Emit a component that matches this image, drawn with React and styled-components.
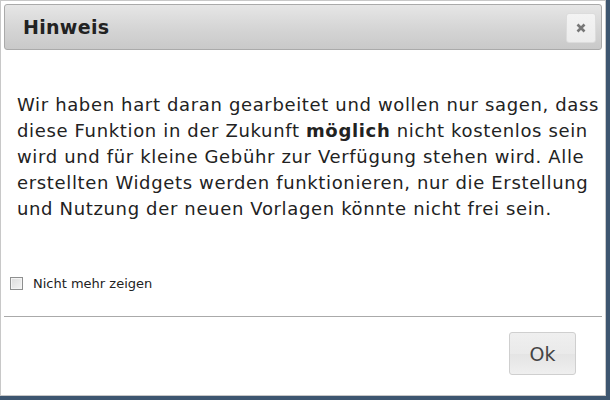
import React from "react";
import styled, { createGlobalStyle } from "styled-components";

const Global = createGlobalStyle`
  html, body { margin: 0; padding: 0; background: #3d5670; }
  body { width: 610px; height: 400px; overflow: hidden; font-family: "DejaVu Sans", Verdana, sans-serif; }
`;

const Dialog = styled.div`
  box-sizing: border-box;
  width: 606px;
  height: 396px;
  background: #fff;
  border: 1px solid #c8c8c8;
  padding: 3px;
  display: flex;
  flex-direction: column;
`;

const TitleBar = styled.div`
  box-sizing: border-box;
  height: 46px;
  flex-shrink: 0;
  border: 1px solid #aaa;
  border-radius: 3px;
  background: linear-gradient(to bottom, #e6e6e6 0%, #d6d6d6 50%, #c9c9c9 100%);
  display: flex;
  align-items: center;
  justify-content: space-between;
  padding: 0 5px 0 18px;
`;

const Title = styled.span`
  font-family: "DejaVu Sans", Verdana, sans-serif;
  font-weight: bold;
  font-size: 19px;
  letter-spacing: 0.3px;
  color: #222;
`;

const CloseButton = styled.button`
  box-sizing: border-box;
  width: 30px;
  height: 30px;
  margin-top: 1px;
  border: 1px solid #dcdcdc;
  border-radius: 3px;
  background: linear-gradient(to bottom, #f3f3f3 0%, #ececec 100%);
  display: flex;
  align-items: center;
  justify-content: center;
  padding: 0;
`;

const Body = styled.div`
  padding: 42px 0 0 13px;
  font-size: 18px;
  line-height: 26px;
  letter-spacing: 0.65px;
  color: #222;
  white-space: nowrap;
`;

const CheckRow = styled.label`
  display: flex;
  align-items: center;
  gap: 10px;
  margin: 54px 0 0 6px;
  font-size: 13px;
  color: #222;
`;

const Box = styled.span`
  box-sizing: border-box;
  width: 13px;
  height: 13px;
  border: 1px solid #8e8f8f;
  background: linear-gradient(135deg, #dcdcdc 0%, #f4f4f4 100%);
  box-shadow: inset 0 0 0 1px #f4f4f4;
`;

const Separator = styled.hr`
  border: none;
  border-top: 1px solid #aaa;
  margin: 25px 0 0 0;
`;

const Footer = styled.div`
  display: flex;
  justify-content: flex-end;
  padding: 15px 26px 0 0;
`;

const OkButton = styled.button`
  box-sizing: border-box;
  width: 67px;
  height: 43px;
  border: 1px solid #cfcfcf;
  border-radius: 3px;
  background: linear-gradient(to bottom, #efefef 0%, #eaeaea 50%, #e4e4e4 51%, #efefef 100%);
  font-family: "DejaVu Sans", Verdana, sans-serif;
  font-size: 19px;
  color: #444;
  padding: 0;
`;

export default function App() {
  return (
    <>
      <Global />
      <Dialog>
        <TitleBar>
          <Title>Hinweis</Title>
          <CloseButton aria-label="close">
            <svg width="10" height="10" viewBox="0 0 10 10">
              <path d="M1.5 1.5 L8.5 8.5 M8.5 1.5 L1.5 8.5" stroke="#777" strokeWidth="2.6" strokeLinecap="butt" />
            </svg>
          </CloseButton>
        </TitleBar>
        <Body>
          Wir haben hart daran gearbeitet und wollen nur sagen, dass<br />
          diese Funktion in der Zukunft <b>möglich</b> nicht kostenlos sein<br />
          wird und für kleine Gebühr zur Verfügung stehen wird. Alle<br />
          erstellten Widgets werden funktionieren, nur die Erstellung<br />
          und Nutzung der neuen Vorlagen könnte nicht frei sein.
        </Body>
        <CheckRow>
          <Box />
          Nicht mehr zeigen
        </CheckRow>
        <Separator />
        <Footer>
          <OkButton>Ok</OkButton>
        </Footer>
      </Dialog>
    </>
  );
}
